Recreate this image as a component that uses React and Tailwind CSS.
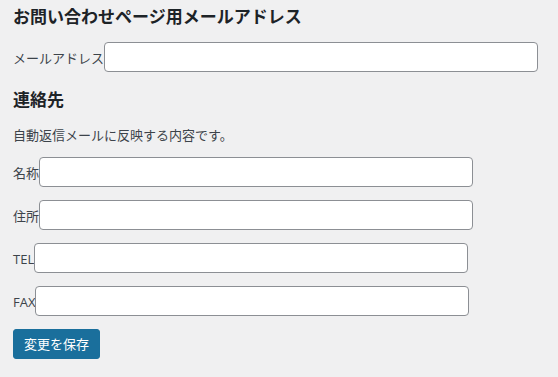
export default function App() {
    // label widths decide where each field starts, so the inputs are not aligned
    const contactFields = [
        { label: "名称", name: "name" },
        { label: "住所", name: "address" },
        { label: "TEL", name: "tel" },
        { label: "FAX", name: "fax" },
    ];

    const inputClass =
        "w-[434px] h-[30px] rounded-[4px] border border-[#8c8f94] bg-white px-2 text-[14px] text-[#2c3338] outline-none focus:border-[#2271b1]";

    return (
        <main
            className="min-h-screen w-full bg-[#f0f0f1] pl-[13px] text-[13px] text-[#3c434a]"
            style={{ fontFamily: '"Open Sans", "Noto Sans CJK JP", sans-serif' }}
        >
            <h2 className="pt-[5px] text-[17px] font-bold leading-[24px] text-[#1d2327]">お問い合わせページ用メールアドレス</h2>

            <div className="mt-[13px] flex h-[30px] items-baseline">
                <label htmlFor="mail">メールアドレス</label>
                <input id="mail" type="text" className={inputClass} />
            </div>

            <h2 className="mt-[16px] text-[17px] font-bold leading-[24px] text-[#1d2327]">連絡先</h2>

            <p className="mt-[13px] leading-[20px]">自動返信メールに反映する内容です。</p>

            <div className="mt-[12px] flex flex-col gap-[13px]">
                {contactFields.map((field) => (
                    <div key={field.name} className="flex h-[30px] items-baseline">
                        <label htmlFor={field.name}>{field.label}</label>
                        <input id={field.name} type="text" className={inputClass} />
                    </div>
                ))}
            </div>

            <button className="mt-[13px] h-[30px] rounded-[3px] border border-[#1a6f9c] bg-[#1a6f9c] px-[10px] text-[13px] leading-[28px] text-white">
                変更を保存
            </button>
        </main>
    );
}
